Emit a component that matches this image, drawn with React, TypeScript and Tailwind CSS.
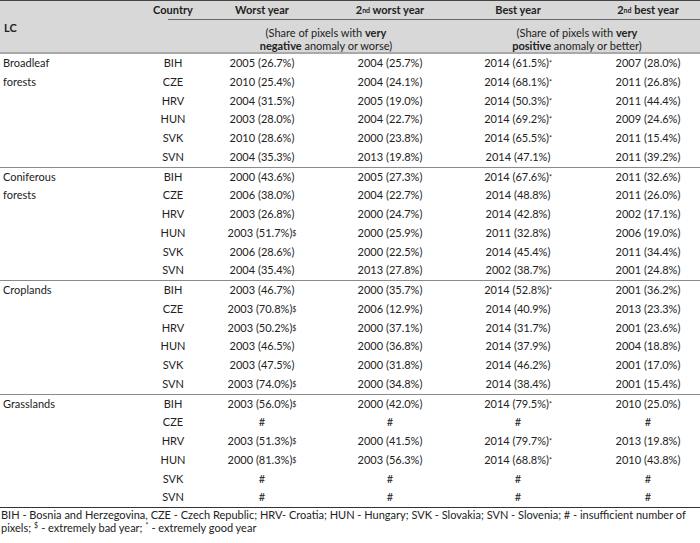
import type { ReactNode } from 'react'

const GRID = 'grid grid-cols-[148px_50px_128px_128px_128px_118px]'

type Group = { label: string[]; rows: [string, string, string, string, string][] }

const GROUPS: Group[] = [
  {
    label: ['Broadleaf', 'forests'],
    rows: [
      ['BIH', '2005 (26.7%)', '2004 (25.7%)', '2014 (61.5%)*', '2007 (28.0%)'],
      ['CZE', '2010 (25.4%)', '2004 (24.1%)', '2014 (68.1%)*', '2011 (26.8%)'],
      ['HRV', '2004 (31.5%)', '2005 (19.0%)', '2014 (50.3%)*', '2011 (44.4%)'],
      ['HUN', '2003 (28.0%)', '2004 (22.7%)', '2014 (69.2%)*', '2009 (24.6%)'],
      ['SVK', '2010 (28.6%)', '2000 (23.8%)', '2014 (65.5%)*', '2011 (15.4%)'],
      ['SVN', '2004 (35.3%)', '2013 (19.8%)', '2014 (47.1%)', '2011 (39.2%)'],
    ],
  },
  {
    label: ['Coniferous', 'forests'],
    rows: [
      ['BIH', '2000 (43.6%)', '2005 (27.3%)', '2014 (67.6%)*', '2011 (32.6%)'],
      ['CZE', '2006 (38.0%)', '2004 (22.7%)', '2014 (48.8%)', '2011 (26.0%)'],
      ['HRV', '2003 (26.8%)', '2000 (24.7%)', '2014 (42.8%)', '2002 (17.1%)'],
      ['HUN', '2003 (51.7%)$', '2000 (25.9%)', '2011 (32.8%)', '2006 (19.0%)'],
      ['SVK', '2006 (28.6%)', '2000 (22.5%)', '2014 (45.4%)', '2011 (34.4%)'],
      ['SVN', '2004 (35.4%)', '2013 (27.8%)', '2002 (38.7%)', '2001 (24.8%)'],
    ],
  },
  {
    label: ['Croplands'],
    rows: [
      ['BIH', '2003 (46.7%)', '2000 (35.7%)', '2014 (52.8%)*', '2001 (36.2%)'],
      ['CZE', '2003 (70.8%)$', '2006 (12.9%)', '2014 (40.9%)', '2013 (23.3%)'],
      ['HRV', '2003 (50.2%)$', '2000 (37.1%)', '2014 (31.7%)', '2001 (23.6%)'],
      ['HUN', '2003 (46.5%)', '2000 (36.8%)', '2014 (37.9%)', '2004 (18.8%)'],
      ['SVK', '2003 (47.5%)', '2000 (31.8%)', '2014 (46.2%)', '2001 (17.0%)'],
      ['SVN', '2003 (74.0%)$', '2000 (34.8%)', '2014 (38.4%)', '2001 (15.4%)'],
    ],
  },
  {
    label: ['Grasslands'],
    rows: [
      ['BIH', '2003 (56.0%)$', '2000 (42.0%)', '2014 (79.5%)*', '2010 (25.0%)'],
      ['CZE', '#', '#', '#', '#'],
      ['HRV', '2003 (51.3%)$', '2000 (41.5%)', '2014 (79.7%)*', '2013 (19.8%)'],
      ['HUN', '2000 (81.3%)$', '2003 (56.3%)', '2014 (68.8%)*', '2010 (43.8%)'],
      ['SVK', '#', '#', '#', '#'],
      ['SVN', '#', '#', '#', '#'],
    ],
  },
]

function Sup({ children }: { children: ReactNode }) {
  return <sup className="text-[7px] leading-none relative -top-[1px]">{children}</sup>
}

function Value({ text }: { text: string }) {
  const last = text.slice(-1)
  if (last === '$' || last === '*') {
    return (
      <span>
        {text.slice(0, -1)}
        <Sup>{last}</Sup>
      </span>
    )
  }
  return <span>{text}</span>
}

function Nd({ children }: { children: ReactNode }) {
  return (
    <span>
      2<Sup>nd</Sup> {children}
    </span>
  )
}

export default function App() {
  return (
    <div className="w-[700px] h-[543px] bg-white text-[#222] text-[11px] font-['Lato','Liberation_Sans',sans-serif] overflow-hidden">
      {/* header */}
      <div className={`${GRID} bg-[#d8d8d8] border-t border-[#444] border-b-2 border-b-[#a9a9a9] h-[54px]`}>
        <div className="row-span-3 flex items-center pl-[4px] pt-[3px] font-bold">LC</div>
        <div className="h-[18px] flex items-center justify-center font-bold">Country</div>
        <div className="h-[18px] flex items-center justify-center font-bold">Worst year</div>
        <div className="h-[18px] flex items-center justify-center font-bold">
          <Nd>worst year</Nd>
        </div>
        <div className="h-[18px] flex items-center justify-center font-bold">Best year</div>
        <div className="h-[18px] flex items-center justify-center font-bold pl-[14px]">
          <Nd>best year</Nd>
        </div>

        <div className="col-start-2 col-span-5 h-px">
          <div className="ml-[20px] h-px bg-[#666]" />
        </div>

        <div className="col-start-3 col-span-2 text-center leading-[13px] pt-[6px]">
          (Share of pixels with <b>very</b>
          <br />
          <b>negative</b> anomaly or worse)
        </div>
        <div className="col-start-5 col-span-2 text-center leading-[13px] pt-[6px]">
          (Share of pixels with <b>very</b>
          <br />
          <b>positive</b> anomaly or better)
        </div>
      </div>

      {/* body */}
      {GROUPS.map((g, gi) => (
        <div
          key={g.label[0]}
          className={`${GRID} ${gi < GROUPS.length - 1 ? 'border-b border-[#8a8a8a]' : 'border-b border-[#333]'}`}
        >
          <div className="row-span-6 pl-[3px] leading-[18.75px]">
            {g.label.map((l) => (
              <div key={l}>{l}</div>
            ))}
          </div>
          {g.rows.map((r) => (
            <div key={r[0]} className="contents">
              <div className="h-[18.75px] flex items-center justify-center">{r[0]}</div>
              <div className="h-[18.75px] flex items-center justify-center">
                <Value text={r[1]} />
              </div>
              <div className="h-[18.75px] flex items-center justify-center">
                <Value text={r[2]} />
              </div>
              <div className="h-[18.75px] flex items-center justify-center">
                <Value text={r[3]} />
              </div>
              <div className="h-[18.75px] flex items-center justify-center pl-[14px]">
                <Value text={r[4]} />
              </div>
            </div>
          ))}
        </div>
      ))}

      {/* footnote */}
      <div className="pl-[1px] leading-[13px] text-[11px] whitespace-nowrap">
        <div>
          BIH - Bosnia and Herzegovina, CZE - Czech Republic; HRV- Croatia; HUN - Hungary; SVK - Slovakia; SVN -
          Slovenia; # - insufficient number of
        </div>
        <div>
          pixels;
          <span className="inline-block text-[7px] leading-[7px] align-[4px] mx-[3px]">$</span>- extremely bad year;
          <span className="inline-block text-[7px] leading-[7px] align-[4px] mx-[3px]">*</span>- extremely good year
        </div>
      </div>
    </div>
  )
}
